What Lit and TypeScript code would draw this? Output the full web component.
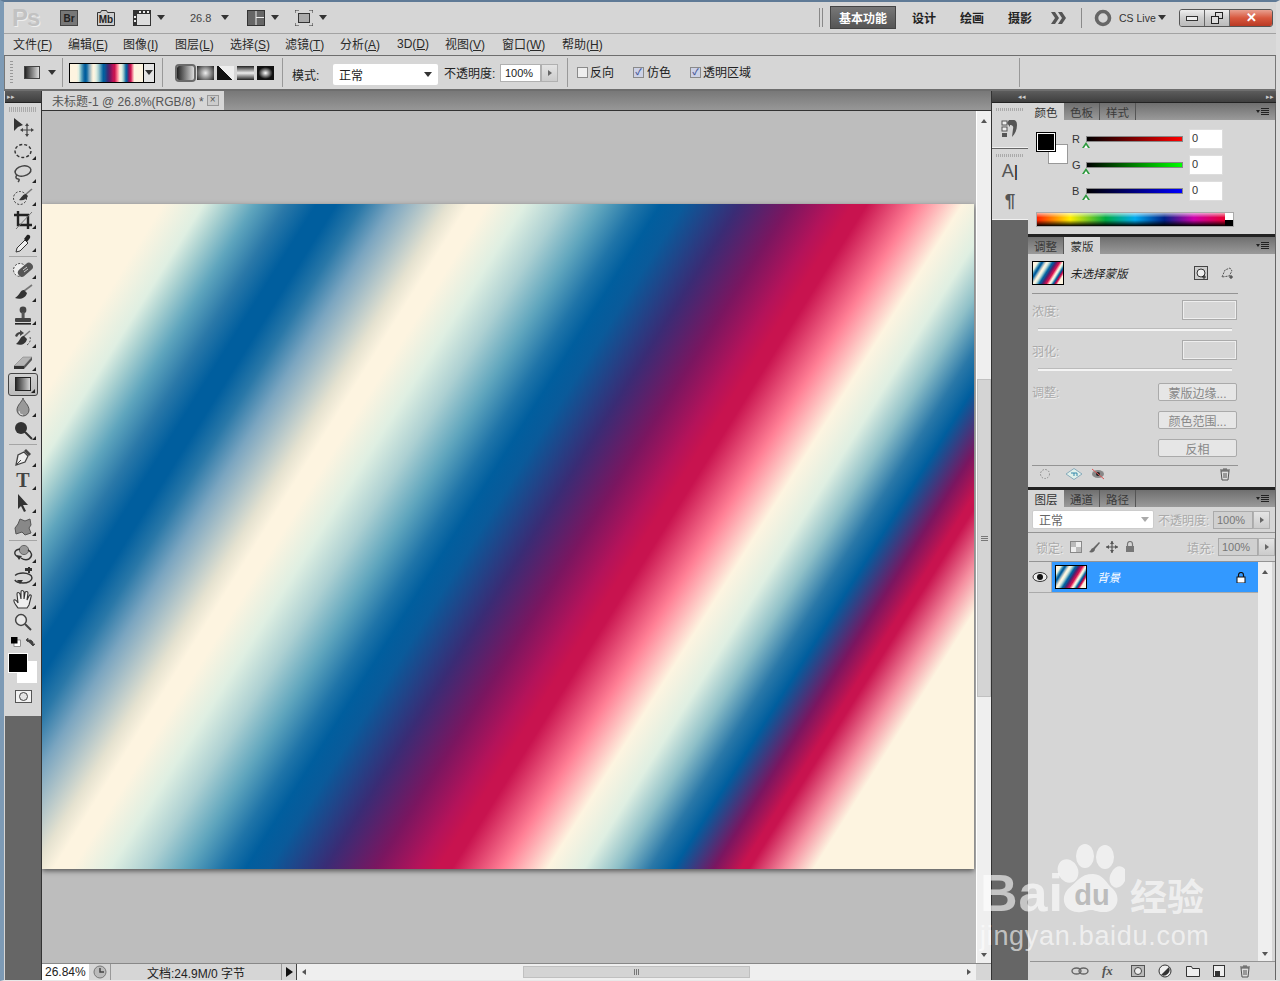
import { LitElement, html, svg, css, unsafeCSS } from 'lit';
import { customElement } from 'lit/decorators.js';

const cream = '#fdf4e0';
const blue = '#005e9e';
const crimson = '#c8134f';
const stopData: [string, number][] = [
  [cream, 0], [cream, 103], ['#dfefe2', 137], ['#a8d0d0', 156], ['#5fa5bd', 181], ['#2a78a8', 208], [blue, 233], [blue, 250], ['#2a78a8', 272],
  ['#7aa5c0', 298], ['#e5e2d0', 345], [cream, 362], [cream, 378], ['#dfefe2', 410], ['#acd0d2', 442], ['#5fa5bd', 475], ['#1f74a8', 505], [blue, 525], ['#0a5a9a', 545],
  ['#3a2c75', 592], ['#7a1660', 635], ['#b4135a', 670], [crimson, 688], [crimson, 700], ['#ff7f95', 742], [cream, 781],
  ['#dfefe2', 812], ['#8fc0c8', 840], ['#2a78a8', 868], [blue, 888], ['#7a1660', 922], [crimson, 945], [crimson, 952], ['#f58fa0', 982], [cream, 1007], [cream, 1143],
];
const stops = unsafeCSS(stopData.map(([c, t]) => `${c} ${(t / 11.43).toFixed(2)}%`).join(','));

const ic = (w: number, h: number, body: unknown) => html`<svg width=${w} height=${h} viewBox="0 0 ${w} ${h}">${body}</svg>`;

const toolIcons: Record<string, unknown> = {
  move: svg`<path d="M2 1v13l4-4 5-2z" fill="#333"/><path d="M15 8v10M10 13h10" stroke="#444" stroke-width="1.2"/><path d="M15 6l-2 3h4zM15 20l-2-3h4zM8 13l3-2v4zM22 13l-3-2v4z" fill="#444"/>`,
  marquee: svg`<ellipse cx="11" cy="11" rx="8" ry="6.5" fill="none" stroke="#333" stroke-width="1.4" stroke-dasharray="3 2"/>`,
  lasso: svg`<ellipse cx="11" cy="8" rx="8" ry="5" transform="rotate(-12 11 8)" fill="none" stroke="#444" stroke-width="1.5"/><path d="M5 12c-2 2-1 4 1 4s1 2 0 3" fill="none" stroke="#444" stroke-width="1.5"/>`,
  quick: svg`<circle cx="8" cy="12" r="6.5" fill="none" stroke="#333" stroke-dasharray="2 1.6"/><path d="M20 3l-7 6" stroke="#777" stroke-width="1.6"/><path d="M14 8c-3 0-4 3-7 6 4 1 8-1 9-4z" fill="#333"/>`,
  crop: svg`<path d="M6 2v14h14M2 6h14v14" fill="none" stroke="#222" stroke-width="2.4"/><path d="M4 20L20 3" stroke="#777"/>`,
  dropper: svg`<path d="M5 16l8-8 3 3-8 8-4 1z" fill="#eee" stroke="#333"/><path d="M12 7l3-4c2-1 4 1 3 3l-3 4z" fill="#222"/>`,
  heal: svg`<circle cx="8" cy="11" r="6.5" fill="#eee" stroke="#444" stroke-dasharray="2 1.5"/><rect x="5" y="7" width="17" height="8" rx="4" transform="rotate(-40 13 11)" fill="#555"/><path d="M11 11l4-3M12 13l4-3" stroke="#ccc"/>`,
  brush: svg`<path d="M20 3l-8 6" stroke="#777" stroke-width="1.6"/><path d="M12 8c-4 0-4 5-9 8 5 2 11 0 12-5z" fill="#333"/>`,
  stamp: svg`<circle cx="11" cy="5" r="3.4" fill="#444"/><rect x="9.6" y="7" width="3" height="6" fill="#555"/><rect x="3" y="13" width="16" height="4" rx="1" fill="#444"/><rect x="3" y="18" width="16" height="1.6" fill="#222"/>`,
  history: svg`<path d="M18 3l-7 6" stroke="#777" stroke-width="1.6"/><path d="M12 8c-4 0-4 5-8 8 5 2 10 0 11-5z" fill="#333"/><path d="M3 8c1-3 3-4 5-4V2l4 3-4 3V6c-1 0-2 1-3 3z" fill="#444"/><path d="M18 9c1 3 0 6-3 8" fill="none" stroke="#555" stroke-dasharray="2 1.5"/>`,
  eraser: svg`<path d="M2 15l9-9h9l-8 9z" fill="#b5b5b5" stroke="#777" stroke-width=".5"/><path d="M2 15h10v3H2z" fill="#333"/><path d="M12 15l8-9v3l-8 9z" fill="#555"/>`,
  gradient: svg`<defs><linearGradient id="tg"><stop offset="0" stop-color="#222"/><stop offset="1" stop-color="#ddd"/></linearGradient></defs><rect x="3.5" y="3.5" width="15" height="13" fill="url(#tg)" stroke="#222"/>`,
  drop: svg`<path d="M11 1c1 4 6 7 6 12a6 6 0 01-12 0c0-5 5-8 6-12z" fill="#999" stroke="#555"/><path d="M7 14a4 4 0 004 4" stroke="#ddd" fill="none"/>`,
  dodge: svg`<circle cx="9" cy="8" r="6" fill="#333"/><path d="M13 12l7 7" stroke="#333" stroke-width="2"/>`,
  pen: svg`<path d="M4 18l2-10 6-3 4 4-3 6z" fill="#eee" stroke="#444" stroke-width="1.3"/><path d="M4 18l5-5" stroke="#444"/><path d="M12 4l2-2 5 5-2 2z" fill="#444"/>`,
  type: svg`<text x="11" y="17" text-anchor="middle" font-family="Liberation Serif,serif" font-weight="700" font-size="20" fill="#444">T</text>`,
  select: svg`<path d="M6 1v15l3-3 3 6 2-1-3-6h5z" fill="#333"/>`,
  shape: svg`<path d="M8 3l5 2 5-2 1 6-2 3 2 5-6 2-3-3-6 2-1-6 3-4z" fill="#888" stroke="#555"/>`,
  rotate: svg`<circle cx="12" cy="7" r="4.6" fill="#999" stroke="#666"/><path d="M8 6C2 7 1 11 6 14M16 7c4 2 5 6 1 9-2 1-5 1-8-1" fill="none" stroke="#333" stroke-width="1.4"/><path d="M4 12l6 1-3 4z" fill="#333"/>`,
  orbit: svg`<ellipse cx="11" cy="12" rx="9" ry="5" fill="none" stroke="#333" stroke-width="1.4" stroke-dasharray="20 5"/><path d="M5 14l6 0-3 4z" fill="#333"/><rect x="13" y="2" width="7" height="3" fill="#333"/><rect x="16" y="1" width="2" height="6" fill="#333"/>`,
  hand: svg`<path d="M6 19c-2-3-5-6-4-8 1-1 3 1 4 3L5 5c0-2 2-2 3 0l1 5V3c0-2 2-2 3 0v7l1-6c0-2 3-2 3 0l-1 7 2-4c1-2 3-1 2 1l-2 8-2 3z" fill="#eee" stroke="#333" stroke-width="1.1"/>`,
  zoom: svg`<circle cx="9" cy="8" r="5.4" fill="#e8e8e8" stroke="#444" stroke-width="1.5"/><path d="M13 12l6 6" stroke="#444" stroke-width="2"/>`,
};

const toolGroups = [
  ['move', 'marquee', 'lasso', 'quick', 'crop', 'dropper'],
  ['heal', 'brush', 'stamp', 'history', 'eraser', 'gradient', 'drop', 'dodge'],
  ['pen', 'type', 'select', 'shape'],
  ['rotate', 'orbit', 'hand', 'zoom'],
];
const noCorner = new Set(['move', 'zoom']);

const menus: [string, string, string, number][] = [
  ['文件(', 'F', ')', 55], ['编辑(', 'E', ')', 55], ['图像(', 'I', ')', 52], ['图层(', 'L', ')', 55],
  ['选择(', 'S', ')', 55], ['滤镜(', 'T', ')', 55], ['分析(', 'A', ')', 57], ['3D(', 'D', ')', 48],
  ['视图(', 'V', ')', 57], ['窗口(', 'W', ')', 60], ['帮助(', 'H', ')', 60],
];

const arrow = html`<span class="tri"></span>`;
const stepper = html`<span class="stepper"><i></i></span>`;
const trash = ic(14, 14, svg`<path d="M3 4h8l-1 9H4z" fill="#ddd" stroke="#555"/><path d="M2 3h10M5 2h4M6 6v5M8 6v5" stroke="#555"/>`);

@customElement('app-root')
export class AppRoot extends LitElement {
  static styles = css`
    :host {
      display: block; width: 1280px; height: 981px; overflow: hidden; position: relative;
      font: 12px "Liberation Sans", "Noto Sans CJK SC", sans-serif; color: #222;
    }
    * { box-sizing: border-box; }
    .app {
      width: 1280px; height: 981px; display: flex; flex-direction: column; background: #d6d6d6;
      border-top: 2px solid #5f7a96; border-left: 4px solid #7d9ab5; border-right: 4px solid #dcdcdc;
      border-bottom: 1px solid #e8e8e8;
    }
    .row { display: flex; align-items: center; }

    .title { height: 32px; flex: none; border-bottom: 1px solid #a3a3a3; }
    .ps { font: 700 24px "Liberation Sans", sans-serif; color: #c2c2c2; margin-left: 8px; width: 48px; letter-spacing: -1px; text-shadow: 1px 1px 0 #eee; }
    .tb { display: flex; align-items: center; }
    .tri { display: inline-block; width: 0; height: 0; border: 4px solid transparent; border-top: 5px solid #333; border-bottom: 0; }
    .zoomv { color: #444; font-size: 11px; }
    .dbl { width: 4px; height: 19px; border-left: 1px solid #888; border-right: 1px solid #888; margin-left: 3px; }
    .ws-on {
      margin-left: 7px; width: 66px; height: 23px; background: linear-gradient(#777, #555); border: 1px solid #444;
      color: #fff; font-weight: 700; font-size: 12px; display: flex; align-items: center; justify-content: center;
    }
    .ws { font-weight: 700; font-size: 12px; color: #222; width: 24px; white-space: nowrap; }
    .vsep { width: 1px; height: 20px; background: #8a8a8a; }
    .live { font-size: 10.5px; color: #333; margin-left: 7px; width: 39px; white-space: nowrap; }
    .winbtns { display: flex; height: 18px; margin-left: 13px; border: 1px solid #555; border-radius: 3px; overflow: hidden; }
    .winbtns span { display: flex; align-items: center; justify-content: center; height: 100%; background: linear-gradient(#eee, #ccc 50%, #bbb); border-right: 1px solid #666; }
    .winbtns .min, .winbtns .max { width: 25px; }
    .winbtns .close { width: 42px; border: 0; background: linear-gradient(#e8a090, #d8583e 50%, #b93a24); color: #fff; font-weight: 700; font-size: 13px; }

    .menu { height: 22px; flex: none; padding: 0 0 2px 9px; border-bottom: 1px solid #6e6e6e; }
    .menu span { white-space: nowrap; flex: none; color: #2a2a2a; }
    .menu u { text-underline-offset: 1px; }

    .opts { height: 35px; flex: none; border-bottom: 2px solid #6e6e6e; border-left: 1px solid #777; border-right: 1px solid #777; }
    .grip { width: 3px; height: 24px; margin-left: 5px; background: repeating-linear-gradient(#999 0 1px, transparent 1px 3px); }
    .osep { width: 1px; height: 29px; background: #999; flex: none; }
    .gtool { width: 16px; height: 13px; background: linear-gradient(90deg, #222, #ddd); margin-left: 11px; border: 1px solid #444; }
    .gprev { width: 86px; height: 20px; margin-left: 6px; border: 1px solid #000; display: flex; }
    .fill { background: linear-gradient(var(--a, 122deg), ${stops}); }
    .gprev .fill { --a: 90deg; width: 73px; }
    .gprev b { flex: 1; background: #e4e4e4; border-left: 1px solid #000; display: flex; align-items: center; justify-content: center; }
    .gtype { width: 17px; height: 14px; flex: none; display: block; margin-left: 3px; }
    .gtype.on { outline: 2px solid #6a6a6a; outline-offset: 0; border-radius: 2px; }
    .g1 { background: linear-gradient(90deg, #222, #ddd); }
    .g2 { background: radial-gradient(circle, #eee, #222); }
    .g3 { background: linear-gradient(45deg, #111 50%, #eee 50%); }
    .g4 { background: linear-gradient(#222, #eee 50%, #222); }
    .g5 { background: radial-gradient(ellipse 60% 60%, #fff, #111 70%); }
    .lbl { white-space: nowrap; flex: none; }
    .low { margin-top: 3px; }
    .high { margin-top: -3px; }
    .select {
      background: #fff; border-radius: 2px; display: flex; align-items: center; justify-content: space-between; flex: none;
      padding: 0 6px;
    }
    .input { background: #fff; border: 1px solid #b0b0b0; display: flex; align-items: center; padding-left: 4px; font-size: 11px; flex: none; }
    .stepper { width: 17px; height: 18px; background: linear-gradient(#e4e4e4, #ccc); border: 1px solid #b0b0b0; display: flex; align-items: center; justify-content: center; flex: none; }
    .stepper i { border: 3px solid transparent; border-left: 4px solid #666; border-right: 0; }
    .chk { width: 11px; height: 11px; border: 1px solid #8a8a8a; background: #eee; font-size: 9px; color: #4a5a9a; line-height: 9px; text-align: center; flex: none; font-weight: 700; }
    .chk.on { background: #cdd2e6; }

    .work { flex: 1; display: flex; min-height: 0; }
    .head { height: 12px; background: linear-gradient(#5c5c5c, #3f3f3f); border-bottom: 1px solid #222; flex: none; color: #ccc; font-size: 7px; line-height: 11px; }
    .tools { width: 37px; flex: none; background: #666; border-right: 1px solid #333; margin-left: 1px; display: flex; flex-direction: column; }
    .tools .body { background: #d6d6d6; height: 613px; padding-top: 2px; display: flex; flex-direction: column; align-items: center; }
    .tools .grip2 { width: 28px; height: 5px; flex: none; margin: 2px 0 4px; background: repeating-linear-gradient(90deg, #aaa 0 1px, transparent 1px 2px); }
    .tool { width: 30px; height: 23px; flex: none; display: flex; align-items: center; justify-content: center; position: relative; }
    .tool.on { border: 1px solid #444; border-radius: 3px; background: linear-gradient(#d0d0d0, #bbb); }
    .tool.corner::after { content: ""; position: absolute; right: 2px; bottom: 2px; border: 2px solid transparent; border-right-color: #222; border-bottom-color: #222; }
    .tsep { width: 28px; height: 1px; background: #a5a5a5; flex: none; margin: 2px 0 1px; }
    .swatches { width: 30px; height: 40px; flex: none; position: relative; }
    .swatches .fg, .swatches .bg { position: absolute; }
    .swatches .bg { left: 9px; top: 13px; width: 20px; height: 22px; background: #fff; }
    .swatches .fg { left: 0; top: 5px; width: 20px; height: 20px; background: #000; border: 1px solid #fff; z-index: 1; }
    .minis { width: 30px; height: 12px; flex: none; display: flex; align-items: center; justify-content: space-between; padding: 0 3px; margin-top: 2px; }
    .qm { width: 17px; height: 13px; flex: none; background: #f2f2f2; border: 1px solid #555; display: flex; align-items: center; justify-content: center; margin-top: 2px; }
    .qm i { width: 9px; height: 9px; border-radius: 50%; border: 1px solid #444; background: #e4e4e4; }

    .doc { width: 950px; flex: none; display: flex; flex-direction: column; border-right: 1px solid #333; }
    .tabs { height: 20px; flex: none; display: flex; background: linear-gradient(#787878, #979797); border-bottom: 1px solid #333; }
    .tab { width: 182px; background: #d6d6d6; color: #555; padding-left: 10px; display: flex; align-items: center; white-space: nowrap; font-size: 12px; }
    .x { width: 12px; height: 11px; border: 1px solid #999; margin-left: 3px; background: #ccc; font-size: 10px; line-height: 8px; text-align: center; color: #555; flex: none; }
    .view { flex: 1; display: flex; min-height: 0; }
    .canvasarea { width: 934px; background: #bdbdbd; flex: none; overflow: hidden; padding-top: 93px; }
    .canvas { display: block; width: 932px; height: 665px; box-shadow: 0 2px 5px rgba(0, 0, 0, .55); }
    .vbar { flex: 1; background: #efefef; border-left: 1px solid #fff; display: flex; flex-direction: column; align-items: center; }
    .up { border: 3px solid transparent; border-bottom: 4px solid #555; border-top: 0; margin-top: 8px; flex: none; }
    .down { border: 3px solid transparent; border-top: 4px solid #555; border-bottom: 0; flex: none; }
    .vthumb { width: 100%; height: 318px; margin-top: 256px; margin-bottom: 256px; background: #d4d4d4; border: 1px solid #c0c0c0; display: flex; align-items: center; justify-content: center; flex: none; }
    .vthumb i { width: 7px; height: 5px; background: repeating-linear-gradient(#777 0 1px, transparent 1px 2px); }
    .status { height: 17px; flex: none; display: flex; border-top: 1px solid #888; background: #d6d6d6; font-size: 12px; }
    .status > * { flex: none; display: flex; align-items: center; }
    .pct { width: 47px; background: #fff; padding-left: 3px; }
    .sicon { width: 22px; justify-content: center; border-right: 1px solid #999; }
    .stext { width: 171px; justify-content: center; border-right: 1px solid #999; }
    .play { width: 15px; justify-content: center; border-right: 1px solid #444; }
    .play i { border: 5px solid transparent; border-left: 7px solid #111; border-right: 0; }
    .hbar { width: 679px; background: #efefef; padding: 0 5px; gap: 5px; }
    .hthumb { width: 229px; height: 12px; margin-left: 212px; margin-right: 212px; background: #d4d4d4; border: 1px solid #c0c0c0; display: flex; align-items: center; justify-content: center; }
    .hthumb i { width: 6px; height: 6px; background: repeating-linear-gradient(90deg, #777 0 1px, transparent 1px 2px); }
    .l { border: 3px solid transparent; border-right: 4px solid #555; border-left: 0; flex: none; }
    .r { border: 3px solid transparent; border-left: 4px solid #555; border-right: 0; flex: none; }

    .dock { flex: 1; display: flex; flex-direction: column; min-width: 0; }
    .dock > .head { display: flex; justify-content: space-between; padding: 0 2px 0 26px; }
    .dockbody { flex: 1; display: flex; min-height: 0; background: #666; }
    .mid { width: 36px; flex: none; }
    .mg { background: #d6d6d6; display: flex; flex-direction: column; align-items: center; border-bottom: 1px solid #f0f0f0; margin-bottom: 1px; }
    .mg .grip2 { width: 28px; height: 3px; flex: none; margin-top: 5px; background: repeating-linear-gradient(90deg, #aaa 0 1px, transparent 1px 2px); }
    .mg .a { margin-top: 2px; font: 18px/24px "Liberation Sans", sans-serif; color: #555; }
    .mg .a span { font-size: 17px; font-weight: 300; color: #111; }
    .mg .p { margin-top: 5px; font: 700 19px/24px "Liberation Sans", sans-serif; color: #555; }
    .panels { width: 247px; flex: none; display: flex; flex-direction: column; background: #222; gap: 3px; }
    .panel { background: #d6d6d6; display: flex; flex-direction: column; flex: none; }
    .panel.grow { flex: 1; min-height: 0; }
    .ptabs { height: 17px; flex: none; display: flex; background: linear-gradient(#6f6f6f, #9a9a9a); position: relative; }
    .ptab { width: 36px; border-right: 1px solid #555; display: flex; align-items: center; justify-content: center; color: #3a3a3a; font-size: 11.5px; }
    .ptab.on { background: #d6d6d6; color: #333; border-right: 0; }
    .pmenu { margin-left: auto; width: 16px; margin-right: 3px; align-self: center; display: flex; align-items: center; gap: 1px; }
    .pmenu i { border: 2px solid transparent; border-top: 3px solid #222; border-bottom: 0; }
    .pmenu b { width: 8px; height: 7px; background: repeating-linear-gradient(#222 0 1px, transparent 1px 2px); }

    .colorp { height: 114px; padding: 9px 0 0 8px; display: flex; flex-direction: column; }
    .colorbody { display: flex; height: 83px; flex: none; }
    .sw { width: 36px; height: 36px; position: relative; flex: none; margin-top: 3px; }
    .sw b { position: absolute; width: 20px; height: 20px; }
    .sw .f { background: #000; border: 1px solid #000; outline: 1px solid #fff; outline-offset: -2px; z-index: 1; left: 0; top: 0; }
    .sw .k { background: #fff; border: 1px solid #999; left: 12px; top: 12px; }
    .sliders { display: flex; flex-direction: column; gap: 6px; }
    .sl { display: flex; height: 20px; align-items: center; }
    .sl .name { width: 14px; color: #333; font-size: 11px; }
    .track { width: 97px; height: 6px; border: 1px solid #888; position: relative; margin-right: 6px; margin-top: -1px; }
    .track::after { content: ""; position: absolute; left: -5px; top: 5px; width: 0; height: 0; border: 4px solid transparent; border-bottom: 6px solid #2f9a3f; border-top: 0; }
    .track::before { content: ""; position: absolute; left: -3px; top: 8px; width: 0; height: 0; border: 2px solid transparent; border-bottom: 3px solid #fff; border-top: 0; z-index: 1; }
    .tr { background: linear-gradient(90deg, #000, #f00); }
    .tg { background: linear-gradient(90deg, #000, #0f0); }
    .tb2 { background: linear-gradient(90deg, #000, #00f); }
    .num { width: 34px; height: 20px; background: #fff; border: 1px solid #ddd; padding-left: 2px; font-size: 11px; display: flex; align-items: flex-start; line-height: 16px; color: #333; }
    .spectrum {
      width: 198px; height: 15px; border: 1px solid #aaa; position: relative; flex: none;
      background: linear-gradient(#ffffffa0, transparent 35%, transparent 55%, #000), linear-gradient(90deg, #f20, #fe0 17%, #0a4 35%, #0ae 50%, #028 65%, #c0a 80%, #e01 100%);
    }
    .spectrum::after { content: ""; position: absolute; right: 0; top: 0; width: 8px; height: 100%; background: linear-gradient(#fff 50%, #000 50%); }

    .maskp { height: 233px; padding: 7px 0 0 4px; display: flex; flex-direction: column; }
    .thumb { width: 32px; height: 24px; border: 1px solid #000; flex: none; }
    .m-name { font-style: italic; font-size: 11.5px; margin-left: 6px; color: #222; width: 124px; white-space: nowrap; }
    .hr { height: 1px; background: #949494; flex: none; }
    .dis { color: #aaa; text-shadow: 1px 1px 0 #eee; white-space: nowrap; }
    .mline { display: flex; align-items: center; justify-content: space-between; height: 20px; width: 205px; flex: none; }
    .box { width: 55px; height: 20px; border: 1px solid #aaa; outline: 1px solid #eee; outline-offset: -2px; flex: none; }
    .track2 { width: 194px; height: 3px; margin: 8px 0 0 6px; background: #f4f4f4; border-top: 1px solid #bbb; flex: none; }
    .btn { width: 79px; height: 18px; flex: none; border: 1px solid #aaa; border-radius: 2px; background: #e6e6e6; color: #888; display: flex; align-items: center; justify-content: center; white-space: nowrap; }
    .btns { display: flex; flex-direction: column; gap: 10px; }

    .layersp { flex: 1; min-height: 0; display: flex; flex-direction: column; position: relative; }
    .lrow { display: flex; align-items: center; padding-left: 4px; flex: none; }
    .lsel { width: 122px; height: 19px; padding: 0 4px 0 6px; border: 1px solid #ccc; color: #666; }
    .lsel i { border: 4px solid transparent; border-top: 5px solid #aaa; border-bottom: 0; }
    .ro { width: 40px; height: 18px; background: #d0d0d0; border: 1px solid #aaa; color: #777; font-size: 11px; display: flex; align-items: center; padding-left: 3px; flex: none; }
    .lockicons { display: flex; gap: 6px; margin-left: 6px; width: 117px; }
    .lbody { flex: 1; display: flex; min-height: 0; margin-left: 1px; border-top: 1px solid #949494; }
    .llist { width: 229px; flex: none; }
    .layer { height: 31px; display: flex; border-bottom: 1px solid #aaa; }
    .eye { width: 23px; background: #d6d6d6; border-right: 1px solid #aaa; display: flex; align-items: center; justify-content: center; flex: none; }
    .sel { flex: 1; background: #3399ff; color: #fff; display: flex; align-items: center; padding-left: 3px; }
    .sel .thumb { height: 24px; }
    .sel em { margin-left: 10px; width: 139px; font-size: 11.5px; }
    .lscroll { width: 14px; flex: none; background: #efefef; display: flex; flex-direction: column; align-items: center; justify-content: space-between; padding-bottom: 5px; }
    .lfoot { height: 19px; flex: none; border-top: 1px solid #949494; display: flex; align-items: center; justify-content: flex-end; gap: 13px; padding-right: 23px; margin-left: 2px; }

    .mark { position: absolute; left: 983px; top: 843px; width: 232px; height: 110px; pointer-events: none; color: rgba(255, 255, 255, .62); }
    .mark .bai { position: absolute; left: -3px; top: 20px; font: 700 52px/60px "Liberation Sans", sans-serif; letter-spacing: 1px; }
    .mark .paw { position: absolute; left: 72px; top: 0; }
    .mark .jy { position: absolute; left: 147px; top: 29px; font: 700 37px/46px "Noto Sans CJK SC", sans-serif; white-space: nowrap; }
    .mark .url { position: absolute; left: -3px; top: 78px; font: 400 27px/30px "Liberation Sans", sans-serif; letter-spacing: .7px; white-space: nowrap; }
  `;

  private renderTools() {
    return toolGroups.map((g, i) => html`
      ${i ? html`<div class="tsep"></div>` : ''}
      ${g.map(t => html`<div class="tool ${t === 'gradient' ? 'on' : ''} ${noCorner.has(t) ? '' : 'corner'}">${ic(22, 21, toolIcons[t])}</div>`)}
    `);
  }

  render() {
    return html`
      <div class="app">
        <div class="title row">
          <div class="ps">Ps</div>
          ${ic(18, 16, svg`<rect x=".5" y=".5" width="17" height="15" fill="#777" stroke="#444"/><text x="9" y="12" text-anchor="middle" font-size="10" font-weight="700" font-family="Liberation Sans,sans-serif" fill="#222">Br</text>`)}
          <span style="width:19px"></span>
          ${ic(18, 16, svg`<path d="M.5 15.5v-13h3l1-2h5l1 2h7v13z" fill="#ccc" stroke="#333"/><text x="9" y="13" text-anchor="middle" font-size="10" font-weight="700" font-family="Liberation Sans,sans-serif" fill="#222">Mb</text>`)}
          <span style="width:18px"></span>
          ${ic(18, 16, svg`<rect x=".5" y=".5" width="17" height="15" fill="#ddd" stroke="#333"/><path d="M0 0h18v4H0zM0 0h4v16H0z" fill="#333"/><path d="M6 1h2v2H6zM10 1h2v2h-2zM14 1h2v2h-2zM1 6h2v2H1zM1 10h2v2H1z" fill="#eee"/>`)}
          <span class="tb" style="margin-left:6px;width:33px">${arrow}</span>
          <span class="zoomv" style="width:31px">26.8</span>${arrow}
          <span style="width:18px"></span>
          ${ic(18, 16, svg`<rect x=".5" y=".5" width="17" height="15" fill="#eee" stroke="#333"/><path d="M1 1h7.500v14H1zM9.500 1H17v6H9.500zM9.500 8H17v7H9.500z" fill="#666"/>`)}
          <span class="tb" style="margin-left:6px;width:24px">${arrow}</span>
          ${ic(18, 16, svg`<path d="M0 3V0h4M14 0h4v3M18 13v3h-4M4 16H0v-3" fill="none" stroke="#333"/><rect x="3.5" y="3.5" width="11" height="9" fill="#aaa" stroke="#333"/>`)}
          <span class="tb" style="margin-left:6px;width:497px">${arrow}</span>
          <span class="dbl"></span>
          <div class="ws-on">基本功能</div>
          <span class="ws" style="margin-left:16px">设计</span>
          <span class="ws" style="margin-left:24px">绘画</span>
          <span class="ws" style="margin-left:24px">摄影</span>
          <span style="margin-left:19px;display:flex">${ic(15, 12, svg`<path d="M0 0h4l4 6-4 6H0l4-6zM7 0h4l4 6-4 6H7l4-6z" fill="#555"/>`)}</span>
          <span class="vsep" style="margin-left:15px"></span>
          <span style="margin-left:12px;display:flex">${ic(18, 18, svg`<circle cx="9" cy="9" r="6.5" fill="none" stroke="#666" stroke-width="3.6"/>`)}</span>
          <span class="live">CS Live</span>
          ${arrow}
          <div class="winbtns">
            <span class="min">${ic(12, 8, svg`<rect x=".5" y="2.5" width="11" height="4" fill="#eee" stroke="#333"/>`)}</span>
            <span class="max">${ic(12, 12, svg`<rect x="4.5" y=".5" width="7" height="6" fill="none" stroke="#222"/><rect x=".5" y="4.5" width="7" height="7" fill="#ddd" stroke="#222"/>`)}</span>
            <span class="close">✕</span>
          </div>
        </div>

        <div class="menu row">
          ${menus.map(([a, b, c, w]) => html`<span style="width:${w}px">${a}<u>${b}</u>${c}</span>`)}
        </div>

        <div class="opts row">
          <div class="grip"></div>
          <div class="gtool"></div>
          <span class="tb" style="margin-left:8px;width:14px">${arrow}</span>
          <div class="osep"></div>
          <div class="gprev"><div class="fill"></div><b>${arrow}</b></div>
          <div class="osep" style="margin-left:7px"></div>
          <span class="gtype g1 on" style="margin-left:14px"></span>
          <span class="gtype g2"></span>
          <span class="gtype g3"></span>
          <span class="gtype g4"></span>
          <span class="gtype g5"></span>
          <div class="osep" style="margin-left:8px"></div>
          <span class="lbl low" style="margin-left:9px;width:41px">模式:</span>
          <div class="select low" style="width:105px;height:21px">正常${arrow}</div>
          <span class="lbl" style="margin-left:6px;width:56px">不透明度:</span>
          <div class="input" style="width:41px;height:18px">100%</div>
          ${stepper}
          <div class="osep" style="margin-left:9px"></div>
          <span class="chk" style="margin-left:9px"></span>
          <span class="lbl high" style="margin-left:2px;width:43px">反向</span>
          <span class="chk on">✓</span>
          <span class="lbl high" style="margin-left:3px;width:43px">仿色</span>
          <span class="chk on">✓</span>
          <span class="lbl high" style="margin-left:2px;width:316px">透明区域</span>
          <div class="osep"></div>
        </div>

        <div class="work">
          <div class="tools">
            <div class="head">&nbsp;▸▸</div>
            <div class="body">
              <div class="grip2"></div>
              ${this.renderTools()}
              <div class="minis">
                ${ic(10, 10, svg`<rect x="3" y="3" width="6.5" height="6.5" fill="#fff" stroke="#555" stroke-width=".6"/><rect width="6.5" height="6.5" fill="#000"/>`)}
                ${ic(11, 11, svg`<path d="M2 3h5l2 2v4M2 3l2-2v4zM9 9L7 7h4z" fill="#444" stroke="#444" stroke-width=".7"/>`)}
              </div>
              <div class="swatches"><div class="fg"></div><div class="bg"></div></div>
              <div class="qm"><i></i></div>
            </div>
          </div>

          <div class="doc">
            <div class="tabs">
              <div class="tab">未标题-1 @ 26.8%(RGB/8) *<span class="x">×</span></div>
            </div>
            <div class="view">
              <div class="canvasarea"><div class="canvas fill"></div></div>
              <div class="vbar">
                <i class="up"></i>
                <div class="vthumb"><i></i></div>
                <i class="down"></i>
              </div>
            </div>
            <div class="status">
              <div class="pct">26.84%</div>
              <div class="sicon">${ic(14, 14, svg`<circle cx="7" cy="7" r="6" fill="#bbb" stroke="#777"/><path d="M7 3v4h4" fill="none" stroke="#444" stroke-width="1.5"/>`)}</div>
              <div class="stext">文档:24.9M/0 字节</div>
              <div class="play"><i></i></div>
              <div class="hbar">
                <i class="l"></i>
                <div class="hthumb"><i></i></div>
                <i class="r"></i>
              </div>
            </div>
          </div>

          <div class="dock">
            <div class="head"><span>◂◂</span><span>▸▸</span></div>
            <div class="dockbody">
              <div class="mid">
                <div class="mg" style="height:45px">
                  <div class="grip2"></div>
                  <span style="margin-top:8px;display:flex">${ic(18, 20, svg`<rect x="1" y="2" width="5" height="4" fill="#eee" stroke="#555"/><rect x="1" y="8" width="5" height="4" fill="#eee" stroke="#555"/><rect x="1" y="14" width="5" height="4" fill="#555"/><path d="M8 1h4c3 0 4 2 4 5 0 5-2 9-5 12l1-8c1-3-1-4-3-4v2l-3-4z" fill="#555"/>`)}</span>
                </div>
                <div class="mg" style="height:71px">
                  <div class="grip2"></div>
                  <div class="a">A<span>|</span></div>
                  <div class="p">¶</div>
                </div>
              </div>
              <div class="panels">
                <div class="panel">
                  <div class="ptabs">
                    <div class="ptab on">颜色</div><div class="ptab">色板</div><div class="ptab">样式</div>
                    <div class="pmenu"><i></i><b></b></div>
                  </div>
                  <div class="colorp">
                    <div class="colorbody">
                      <div class="sw"><b class="f"></b><b class="k"></b></div>
                      <div class="sliders">
                        <div class="sl"><span class="name">R</span><span class="track tr"></span><span class="num">0</span></div>
                        <div class="sl"><span class="name">G</span><span class="track tg"></span><span class="num">0</span></div>
                        <div class="sl"><span class="name">B</span><span class="track tb2"></span><span class="num">0</span></div>
                      </div>
                    </div>
                    <div class="spectrum"></div>
                  </div>
                </div>

                <div class="panel">
                  <div class="ptabs">
                    <div class="ptab">调整</div><div class="ptab on">蒙版</div>
                    <div class="pmenu"><i></i><b></b></div>
                  </div>
                  <div class="maskp">
                    <div class="row" style="height:24px;flex:none">
                      <div class="thumb fill"></div>
                      <span class="m-name">未选择蒙版</span>
                      <span style="display:flex;width:26px">${ic(14, 14, svg`<rect x=".5" y=".5" width="13" height="13" fill="#ccc" stroke="#444"/><circle cx="7" cy="7" r="4" fill="#eee" stroke="#333"/><path d="M10 9v4M8 11h4" stroke="#222"/>`)}</span>
                      ${ic(16, 14, svg`<path d="M2 11l3-7 5-2 2 3-3 5z" fill="none" stroke="#555" stroke-dasharray="2 1"/><path d="M11 9v4M9 11h4" stroke="#333"/>`)}
                    </div>
                    <div class="hr" style="margin-top:8px;width:206px"></div>
                    <div class="mline" style="margin-top:6px"><span class="dis">浓度:</span><span class="box"></span></div>
                    <div class="track2"></div>
                    <div class="mline" style="margin-top:9px"><span class="dis">羽化:</span><span class="box"></span></div>
                    <div class="track2"></div>
                    <div style="display:flex;justify-content:space-between;width:205px;margin-top:12px;flex:none">
                      <span class="dis">调整:</span>
                      <div class="btns"><div class="btn">蒙版边缘...</div><div class="btn">颜色范围...</div><div class="btn">反相</div></div>
                    </div>
                    <div class="hr" style="margin-top:8px;width:206px"></div>
                    <div class="row" style="height:16px;flex:none;padding-left:7px">
                      <span style="width:26px;display:flex">${ic(12, 12, svg`<circle cx="6" cy="6" r="4.5" fill="none" stroke="#888" stroke-dasharray="1.5 1.5"/>`)}</span>
                      <span style="width:26px;display:flex">${ic(18, 12, svg`<path d="M9 .5L17 6l-8 5.500L1 6z" fill="#dff0ea" stroke="#8ab"/><path d="M6 5h6v3M9 5v3" fill="none" stroke="#38a"/>`)}</span>
                      <span style="width:127px;display:flex">${ic(14, 12, svg`<ellipse cx="7" cy="6" rx="6" ry="4" fill="#888"/><circle cx="7" cy="6" r="2" fill="#222"/><path d="M1 1l12 10" stroke="#d55"/>`)}</span>
                      ${trash}
                    </div>
                  </div>
                </div>

                <div class="panel grow">
                  <div class="ptabs">
                    <div class="ptab on">图层</div><div class="ptab">通道</div><div class="ptab">路径</div>
                    <div class="pmenu"><i></i><b></b></div>
                  </div>
                  <div class="layersp">
                    <div class="lrow" style="height:26px;border-bottom:1px solid #949494">
                      <div class="select lsel">正常<i></i></div>
                      <span class="dis" style="margin-left:4px;width:55px">不透明度:</span>
                      <div class="ro">100%</div>${stepper}
                    </div>
                    <div class="lrow" style="height:28px">
                      <span class="dis" style="margin-left:4px;width:28px">锁定:</span>
                      <div class="lockicons">
                        ${ic(12, 12, svg`<rect x=".5" y=".5" width="11" height="11" fill="#eee" stroke="#888"/><path d="M1 1h5v5H1zM6 6h5v5H6z" fill="#bbb"/>`)}
                        ${ic(12, 12, svg`<path d="M11 1L5 7c-2 0-2 3-4 4 3 1 6 0 6-3l5-6z" fill="#666"/>`)}
                        ${ic(12, 12, svg`<path d="M6 0v12M0 6h12" stroke="#555" stroke-width="1.2"/><path d="M6 0L4 3h4zM6 12L4 9h4zM0 6l3-2v4zM12 6L9 4v4z" fill="#555"/>`)}
                        ${ic(12, 12, svg`<rect x="2" y="5" width="8" height="6" fill="#777"/><path d="M3.500 5V3a2.500 2.500 0 015 0v2" fill="none" stroke="#777" stroke-width="1.200"/>`)}
                      </div>
                      <span class="dis" style="width:31px">填充:</span>
                      <div class="ro">100%</div>${stepper}
                    </div>
                    <div class="lbody">
                      <div class="llist">
                        <div class="layer">
                          <div class="eye">${ic(16, 12, svg`<ellipse cx="8" cy="6" rx="7" ry="4.5" fill="#eee" stroke="#333"/><circle cx="8" cy="6" r="3" fill="#111"/>`)}</div>
                          <div class="sel">
                            <div class="thumb fill"></div>
                            <em>背景</em>
                            ${ic(10, 11, svg`<rect x="1" y="5" width="8" height="6" fill="#fff" stroke="#111"/><path d="M2.500 5V3a2.500 2.500 0 015 0v2" fill="none" stroke="#111" stroke-width="1.200"/>`)}
                          </div>
                        </div>
                      </div>
                      <div class="lscroll"><i class="up"></i><i class="down"></i></div>
                    </div>
                    <div class="lfoot">
                      ${ic(18, 10, svg`<ellipse cx="5.500" cy="5" rx="4.500" ry="3" fill="none" stroke="#666" stroke-width="1.400"/><ellipse cx="12.500" cy="5" rx="4.500" ry="3" fill="none" stroke="#666" stroke-width="1.400"/>`)}
                      <span style="font:italic 700 13px 'Liberation Serif',serif;color:#555;width:16px">fx</span>
                      ${ic(14, 12, svg`<rect x=".5" y=".5" width="13" height="11" fill="#bbb" stroke="#555"/><circle cx="7" cy="6" r="3.500" fill="#eee" stroke="#444"/>`)}
                      ${ic(15, 14, svg`<circle cx="7" cy="7" r="6" fill="#eee" stroke="#333"/><path d="M11 3L3 11a6 6 0 008-8z" fill="#333"/>`)}
                      ${ic(14, 12, svg`<path d="M.5 11.500v-10h5l1 2h7v8z" fill="#eee" stroke="#333"/>`)}
                      ${ic(12, 12, svg`<rect x=".5" y=".5" width="11" height="11" fill="#eee" stroke="#333"/><path d="M2 6h5v5H2z" fill="#333"/>`)}
                      ${trash}
                    </div>
                  </div>
                </div>
              </div>
            </div>
          </div>
        </div>
      </div>

      <div class="mark">
        <div class="bai">Bai</div>
        <svg class="paw" width="70" height="76" viewBox="0 0 70 76">
          <ellipse cx="30" cy="13" rx="9" ry="12" fill="currentColor"/>
          <ellipse cx="50" cy="14" rx="9" ry="12" fill="currentColor"/>
          <ellipse cx="13" cy="28" rx="10" ry="12" transform="rotate(-25 13 28)" fill="currentColor"/>
          <ellipse cx="63" cy="34" rx="8" ry="11" transform="rotate(20 63 34)" fill="currentColor"/>
          <path d="M38 31c10 0 13 9 20 15 9 9 4 24-10 23-6 0-8-2-12-2s-8 3-14 2c-13-1-17-14-9-23 9-7 12-15 25-15z" fill="currentColor"/>
          <text x="37" y="62" text-anchor="middle" font-family="Liberation Sans,sans-serif" font-weight="700" font-size="29" fill="#bcbcbc">du</text>
        </svg>
        <div class="jy">经验</div>
        <div class="url">jingyan.baidu.com</div>
      </div>
    `;
  }
}
